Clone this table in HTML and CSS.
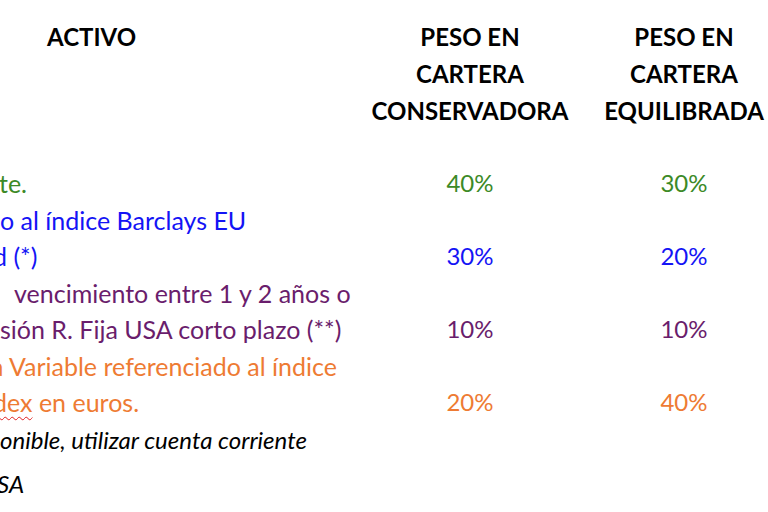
FILE: index.html
```html
<!DOCTYPE html>
<html lang="es">
<head>
<meta charset="utf-8">
<title>Cartera</title>
<link rel="stylesheet" href="styles.css">
</head>
<body>
<div class="sheet">
  <div class="row head">
    <div class="cell c1"><div class="activo">ACTIVO</div></div>
    <div class="cell c2">PESO EN<br>CARTERA<br>CONSERVADORA</div>
    <div class="cell c3">PESO EN<br>CARTERA<br>EQUILIBRADA</div>
  </div>
  <div class="body">
    <div class="row green">
      <div class="cell c1"><div class="ln l-te">te.</div></div>
      <div class="cell c2">40%</div>
      <div class="cell c3">30%</div>
    </div>
    <div class="row blue">
      <div class="cell c1"><div class="ln l-o">o al índice Barclays EU</div><div class="ln l-d">d (*)</div></div>
      <div class="cell c2">30%</div>
      <div class="cell c3">20%</div>
    </div>
    <div class="row purple">
      <div class="cell c1"><div class="ln l-v">vencimiento entre 1 y 2 años o</div><div class="ln l-s">sión R. Fija USA corto plazo (**)</div></div>
      <div class="cell c2">10%</div>
      <div class="cell c3">10%</div>
    </div>
    <div class="row orange">
      <div class="cell c1"><div class="ln l-a">a Variable referenciado al índice</div><div class="ln l-x"><span class="typo">dex</span> en euros.</div></div>
      <div class="cell c2">20%</div>
      <div class="cell c3">40%</div>
    </div>
  </div>
  <p class="note n1">onible, utilizar cuenta corriente</p>
  <p class="note n2">SA</p>
</div>
</body>
</html>
```
FILE: styles.css
```css
html, body {
  margin: 0;
  padding: 0;
  background: #ffffff;
  overflow: hidden;
}
body {
  width: 768px;
  height: 512px;
  font-family: Lato, "Open Sans", sans-serif;
  font-size: 24px;
  color: #000;
}
.sheet {
  display: flex;
  flex-direction: column;
}
.row {
  display: grid;
  grid-template-columns: 360px 220px 208px;
}
.head {
  padding-top: 18px;
  font-weight: 700;
  line-height: 37px;
}
.head .c2, .head .c3 {
  text-align: center;
}
.activo {
  padding-left: 47px;
}
.body {
  margin-top: 36px;
  line-height: 36.5px;
}
.body .c1 {
  font-size: 25px;
}
.body .c2, .body .c3 {
  text-align: center;
  align-self: end;
}
.ln {
  white-space: nowrap;
}
.l-d { margin-left: -7px; }
.l-v { margin-left: 14px; }
.l-a { margin-left: -9px; }
.l-x { margin-left: -7px; }
.l-te { margin-left: -1px; }
.green { color: #3c8a27; }
.blue { color: #1414f5; }
.purple { color: #6a1d6c; }
.orange { color: #ee7b33; }
.typo {
  text-decoration: underline wavy #e02020;
  text-decoration-thickness: 1px;
  text-underline-offset: 4px;
}
.note {
  margin: 0;
  font-style: italic;
  font-size: 24px;
  line-height: 36px;
  white-space: nowrap;
}
.n1 { margin-top: 1px; margin-left: 0; }
.n2 { margin-top: 8px; margin-left: -3px; }
```
